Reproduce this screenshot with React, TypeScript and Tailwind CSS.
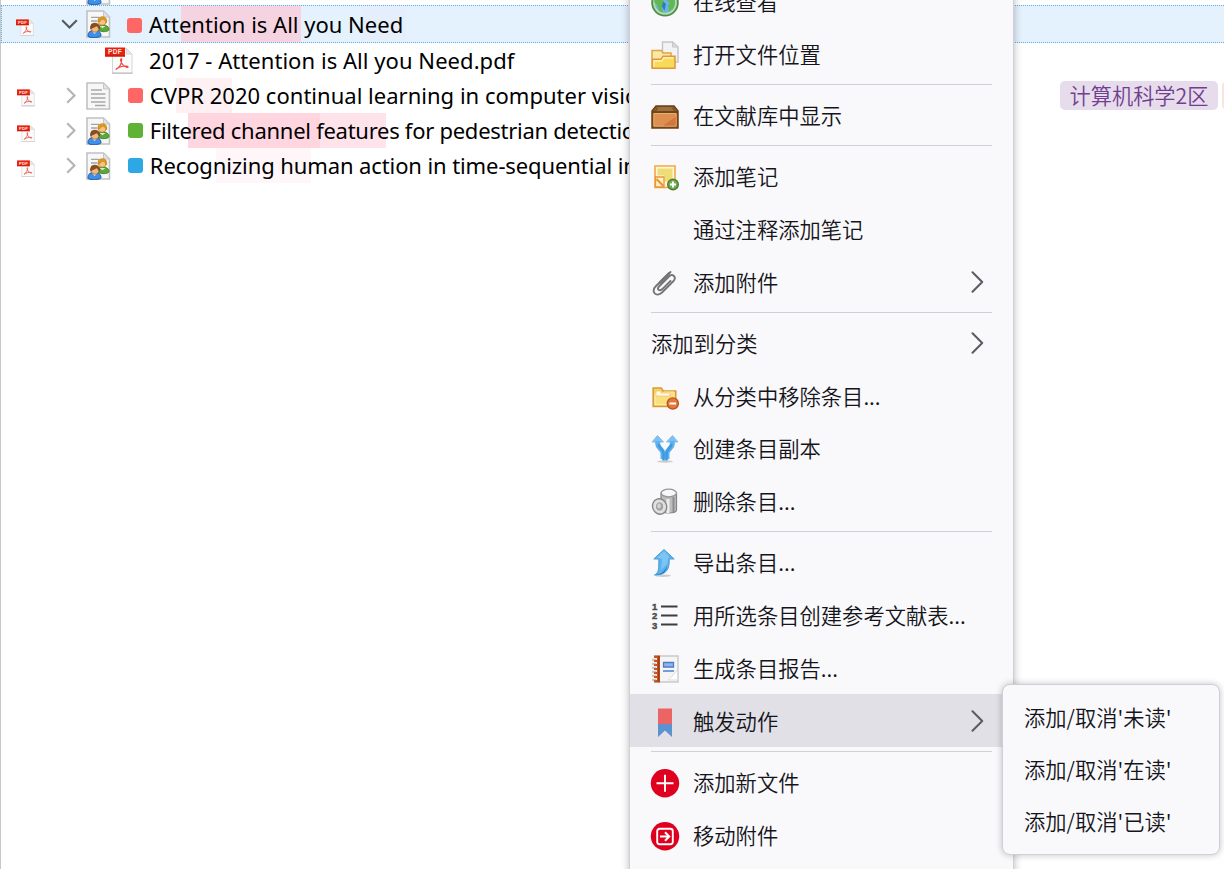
import React from "react";

const LATIN = "font-['Noto_Sans','Noto_Sans_CJK_SC',sans-serif]";
const CJK = "font-['Noto_Sans_CJK_SC','Noto_Sans',sans-serif]";

function PdfIcon({ className }: { className: string }) {
  return (
    <svg viewBox="0 0 28 27" className={className}>
      <path d="M7.5 1.5h14l5.5 5.5v19h-19.500z" fill="#fbfbfb" stroke="#d6d6d6" strokeWidth="1" />
      <path d="M21.500 1.500v5.500h5.500z" fill="#e9e9e9" stroke="#cccccc" strokeWidth=".7" />
      <path d="M7 26.200h20.500" stroke="#b5b5b5" strokeWidth="1" />
      <path d="M0 .5h20v9h-20z" fill="#e8210c" />
      <path d="M0 8.500h20v1h-20z" fill="#b91706" />
      <text x="10" y="7.400" textAnchor="middle" fontSize="6.500" fontWeight="700" fill="#ffe9e6" fontFamily="Liberation Sans, sans-serif" letterSpacing=".3">PDF</text>
      <path d="M11.500 22c2.500-1.500 5-5.500 5.200-9.300.1-1.500-1.400-1.200-1.100.4.6 3.400 3 6.200 6.400 7.300 1.500.3 1.500-1.300-.2-1.400-3.400-.1-7 .8-9.700 2.200-1.200.8-1.200 1.600-.6.8z" fill="none" stroke="#ec4a42" strokeWidth="1.200" />
    </svg>
  );
}

function PageBase() {
  return (
    <>
      <path d="M1 1h16.500l6 6v20h-22.500z" fill="#f7f7f7" stroke="#bfc1c2" strokeWidth="1.600" />
      <path d="M17.500 1v6h6z" fill="#e2e2e2" stroke="#c5c7c8" strokeWidth="1" />
    </>
  );
}

function DocIcon() {
  return (
    <svg viewBox="0 0 25 28" className="h-7 w-[25px]">
      <PageBase />
      <path d="M5 8h11M5 12h14.500M5 16h14.500M5 20h14.500M9 23.500h10.500" stroke="#a9a9a9" strokeWidth="1.300" />
    </svg>
  );
}

function PeopleIcon() {
  return (
    <svg viewBox="0 0 25 28" className="h-7 w-[25px]">
      <PageBase />
      <path d="M5 7.300h8M5 11h6M5 14.500h3" stroke="#a4a4a4" strokeWidth="1.300" />
      <path d="M11.500 20.500c0-4 2-5.500 5-5.500s6.700 1.300 6.500 4.500c-.1 1.600-2.700 2.200-6 2.200z" fill="#58a93a" stroke="#357c20" strokeWidth=".8" />
      <path d="M13.500 16l3 2.300 3-2.300z" fill="#d6efc3" />
      <circle cx="16.200" cy="11.300" r="4" fill="#f6c483" stroke="#b5731d" strokeWidth=".7" />
      <path d="M12 12c-.6-4 2-5.500 4.500-5.300 3.300 0 5 2.500 3.900 6.300-.9-2.500-2.200-3.500-4-3.800-1.500 1.600-2.600 2.500-4.400 2.800z" fill="#dd9a20" stroke="#b47415" strokeWidth=".5" />
      <path d="M2 26c0-4.500 2.500-5.500 6.500-5.500s6.500 1.500 6.500 5.200c0 2.200-13 2.700-13 .3z" fill="#3e8fe8" stroke="#174fa9" strokeWidth=".9" />
      <path d="M6 21.300h5.200l-2.500 2.600z" fill="#e3f1ff" />
      <circle cx="9" cy="18" r="4.200" fill="#f3b87e" stroke="#9a541b" strokeWidth=".7" />
      <path d="M4.800 19c-1-4.300 1.500-5.900 4.300-5.800 3.300 0 5.200 2.500 4.100 6-.7-1.700-1.700-2.800-3-3.100-1.700 1.400-3.700 1.300-5.400 2.900z" fill="#8c4d1d" stroke="#653411" strokeWidth=".5" />
    </svg>
  );
}

type Mark = { className: string };

type Entry = {
  title: string;
  icon: "doc" | "people";
  dot: string;
  marks: Mark[];
  tracking: string;
};

const entries: Entry[] = [
  {
    title: "CVPR 2020 continual learning in computer vision",
    icon: "doc",
    dot: "bg-[#ff6666]",
    marks: [{ className: "left-[175px] w-14 bg-[#fff0f4]" }],
    tracking: "tracking-[0.02px]",
  },
  {
    title: "Filtered channel features for pedestrian detection",
    icon: "people",
    dot: "bg-[#5fb236]",
    marks: [
      { className: "left-[187px] w-[132px] bg-[#ffd5e0]" },
      { className: "left-[319px] w-[66px] bg-[#ffe3eb]" },
    ],
    tracking: "tracking-[-0.27px]",
  },
  {
    title: "Recognizing human action in time-sequential images",
    icon: "people",
    dot: "bg-[#2ea8e5]",
    marks: [{ className: "left-[215px] w-[95px] bg-[#fff6fa]" }],
    tracking: "tracking-[-0.1px]",
  },
];

function Title({ text, tracking }: { text: string; tracking: string }) {
  return <span className={`relative whitespace-pre text-[22px] leading-[35px] text-black ${tracking}`}>{text}</span>;
}

function EntryRow({ entry }: { entry: Entry }) {
  return (
    <div className="relative flex h-[35.200px] items-center pl-4">
      {entry.marks.map((m) => (
        <span key={m.className} className={`absolute top-0 h-[35px] ${m.className}`} />
      ))}
      <PdfIcon className="mt-[5px] h-[17.500px] w-[18px]" />
      <svg viewBox="0 0 10 17" className="ml-[31px] h-[17px] w-[10px]">
        <path d="M1.200 1.200l7.300 7.300-7.300 7.300" fill="none" stroke="#b4b4b4" strokeWidth="2.100" />
      </svg>
      <span className="ml-[10px]">{entry.icon === "doc" ? <DocIcon /> : <PeopleIcon />}</span>
      <span className={`ml-[17px] mr-[6.800px] size-[15px] rounded-[3px] ${entry.dot}`} />
      <Title text={entry.title} tracking={entry.tracking} />
    </div>
  );
}

const icons: Record<string, React.ReactNode> = {
  globe: (
    <g transform="translate(0 .8)">
      <circle cx="14" cy="14" r="13" fill="#63ac54" stroke="#4c8c46" strokeWidth="1.500" />
      <circle cx="14" cy="14" r="11" fill="#6ab4ea" stroke="#b9dcae" strokeWidth="1.600" />
      <path d="M4 10c3-1 5 1 8 1l2 4-3 4 1 5-4-2-2-6-3-3zM17 5l6 4 1 6-2 5-4 3-1-6 2-3-4-3z" fill="#62b850" />
      <path d="M12 13l3 2-1.500 7-2.500-4z" fill="#2f78c4" />
    </g>
  ),
  open: (
    <>
      <path d="M11.500 1h10l5.500 5v15h-15.500z" fill="#f3f3f3" stroke="#c6c6c6" strokeWidth="1.500" />
      <path d="M21.500 1v5h5.500z" fill="#ddd" stroke="#c6c6c6" />
      <path d="M1 27v-17.500h9.500l1.500 2.500h8v15z" fill="#fae8a6" stroke="#dfa545" strokeWidth="1.500" />
      <path d="M1.500 27.300v-9h8.500l2-3h12v12z" fill="#f7da58" stroke="#e0963b" strokeWidth="1.500" />
      <path d="M3 25.800v-6h7.800l2-3h9.700" fill="none" stroke="#fff3bf" strokeWidth="1.300" />
    </>
  ),
  box: (
    <>
      <path d="M1 9l4-5h18l4 5v17h-26z" fill="#815020" stroke="#6d4013" strokeWidth="1.500" />
      <path d="M6 5h16l3.500 4.500h-23z" fill="#9b713f" />
      <path d="M7 5.500l-3 4M21 5.500l3 4" stroke="#6a3e14" strokeWidth="1" />
      <path d="M2.800 11.500h22.400v12.700h-22.400z" fill="#dd8f4f" stroke="#efb679" strokeWidth=".9" />
      <path d="M12 23.700l12.700-9v9z" fill="#c96031" opacity=".55" />
      <path d="M1 10h26" stroke="#6d4013" strokeWidth="1.600" />
    </>
  ),
  note: (
    <>
      <path d="M4 3h20v21.500h-20z" fill="#fff8d6" stroke="#f6a54c" strokeWidth="1.600" />
      <path d="M6.500 5.500h15v13h-8v-6h-7z" fill="#eedc76" />
      <path d="M4.500 14h8.500v10h-8.500z" fill="#fff2c8" stroke="#e99535" strokeWidth="1.300" />
      <path d="M5.500 16l7 7" stroke="#e99535" strokeWidth="2.200" />
      <circle cx="22" cy="21.500" r="5.300" fill="#75aa52" stroke="#477f32" strokeWidth="1.400" />
      <path d="M22 18.500v6M19 21.500h6" stroke="#fff" strokeWidth="2" />
    </>
  ),
  clip: (
    <g transform="translate(-1 .5)" fill="none" stroke="#757575" strokeLinecap="round" strokeLinejoin="round">
      <path d="M20.500 2.500l-14.500 14c-6 6 .5 11.500 6 6.500l11.500-11.500c3.500-4-1-8-4.500-4.500l-10 10c-2.800 3 .5 5 3 2.800l8.500-8.500" strokeWidth="1.900" />
      <path d="M19 4l-9 9" strokeWidth="2.600" />
    </g>
  ),
  folder: (
    <>
      <path d="M2.200 23.500v-18.500h8l2 3h12.500v15.500z" fill="#f7d55d" stroke="#d99b37" strokeWidth="1.600" />
      <path d="M4 21.500v-11h7l2-1.500h10v12.500z" fill="#f9df82" stroke="#fff0ae" strokeWidth="1" />
      <path d="M5 8h5v2h9v3h-14z" fill="#fffbe8" stroke="#ecc25f" strokeWidth=".7" />
      <circle cx="21.800" cy="20.500" r="5.600" fill="#e1793c" stroke="#bd5019" strokeWidth="1.300" />
      <path d="M18.500 20.500h6.600" stroke="#fff" strokeWidth="2" />
    </>
  ),
  duplicate: (
    <>
      <ellipse cx="14" cy="26.500" rx="8" ry="1.200" fill="#ccc" />
      <path d="M1 7l5.500-6.500 6 6.500zM27 7l-5.500-6.500-6 6.500z" fill="#7fc0f0" stroke="#7fc0f0" strokeWidth="1" strokeLinejoin="round" />
      <path d="M6.700 6v3c0 4.500 5.300 5 5.300 9.500v5.500M21.300 6v3c0 4.500-5.300 5-5.300 9.500v5.500" fill="none" stroke="#62b1ea" strokeWidth="5" />
      <path d="M7.500 9c.5 4 5 5 5 9.500v7M20.500 9c-.5 4-5 5-5 9.500v7" fill="none" stroke="#3d9be6" strokeWidth="2.600" />
    </>
  ),
  trash: (
    <>
      <path d="M10 5v17c0 4 15.500 4 15.500 0v-17z" fill="#bcbcbc" stroke="#858585" strokeWidth="1.200" />
      <path d="M17 11v14" stroke="#ececec" strokeWidth="3" />
      <path d="M22.500 9v15" stroke="#8d8d8d" strokeWidth="2" />
      <ellipse cx="17.800" cy="5" rx="7.700" ry="3.800" fill="#f8f8f8" stroke="#979797" strokeWidth="1.300" />
      <ellipse cx="8.600" cy="18.500" rx="7" ry="7.800" fill="#ddd" stroke="#858585" strokeWidth="1.300" transform="rotate(-20 8.600 18.500)" />
      <ellipse cx="8.600" cy="18.500" rx="4.300" ry="4.800" fill="#a5a5a5" stroke="#eee" strokeWidth="1" />
      <ellipse cx="8" cy="18" rx="1.800" ry="2.400" fill="#d5d5d5" />
    </>
  ),
  export: (
    <>
      <ellipse cx="12" cy="26.700" rx="8" ry="1.200" fill="#ccc" />
      <path d="M3.500 26c4.500-2 4.300-7 4.300-16h-5l10.200-9.500 10.200 9.500h-5c.5 9.500-2 16-14.700 16z" fill="#5cb1ed" stroke="#4a9fdd" strokeWidth="1" strokeLinejoin="round" />
      <path d="M6 8.500l7-6.500 5 5-2 8-6 6 1-11z" fill="#93d0f7" opacity=".6" />
      <path d="M4 26c6-.5 10-4 12-9-1 7-5 9-12 9z" fill="#2377bd" />
    </>
  ),
  numbers: (
    <>
      <g fontFamily="Liberation Sans, sans-serif" fontSize="9.500" fontWeight="700" fill="#4a4a4a" stroke="#4a4a4a" strokeWidth=".4">
        <text x="1" y="8">1</text>
        <text x="1" y="17.300">2</text>
        <text x="1" y="26.600">3</text>
      </g>
      <path d="M10 4.500h16.500M10 13.500h16.500M10 22.500h16.500" stroke="#3e3e3e" strokeWidth="2" />
    </>
  ),
  report: (
    <>
      <path d="M4 1h23v26h-23z" fill="#f5f5f5" stroke="#c9c9c9" strokeWidth="1.400" />
      <path d="M3 .5h6v27h-6z" fill="#c6531f" />
      <path d="M7.800 1v26" stroke="#9b3a10" strokeWidth="1.300" />
      <path d="M1 4h5M1 8h5M1 12h5M1 16h5M1 20h5M1 24h5" stroke="#eee" strokeWidth="2" />
      <path d="M1 5h4M1 9h4M1 13h4M1 17h4M1 21h4M1 25h4" stroke="#a68873" strokeWidth=".9" />
      <path d="M12.500 7.500h10v4.500h-10z" fill="#91b5e8" stroke="#4c7ec8" strokeWidth="1.300" />
      <path d="M12 16h11" stroke="#6594da" strokeWidth="1.800" />
      <path d="M26.500 15l-9 10h9z" fill="#fdfdfd" stroke="#dedede" strokeWidth="1" />
    </>
  ),
  bookmark: (
    <>
      <path d="M7 .5h14v16h-14z" fill="#ed6464" />
      <path d="M7 16h14v13l-7-6.500-7 6.500z" fill="#5b92d0" />
    </>
  ),
  add: (
    <g transform="translate(0 .3)">
      <circle cx="14" cy="14" r="14.200" fill="#df001f" />
      <path d="M14 5.500v17M5.500 14h17" stroke="#fff" strokeWidth="1.900" />
    </g>
  ),
  move: (
    <g transform="translate(0 .3)">
      <circle cx="14" cy="14" r="14.200" fill="#df001f" />
      <rect x="6.200" y="6.400" width="15.600" height="15.600" rx="2.500" fill="none" stroke="#fff" strokeWidth="1.900" />
      <path d="M9 14.200h9M14 10l4.200 4.200-4.200 4.200" fill="none" stroke="#fff" strokeWidth="2" />
    </g>
  ),
};

type MenuEntry = { label: string; icon?: string; flush?: boolean; sub?: boolean; active?: boolean };

const groups: MenuEntry[][] = [
  [
    { label: "在线查看", icon: "globe" },
    { label: "打开文件位置", icon: "open" },
  ],
  [{ label: "在文献库中显示", icon: "box" }],
  [
    { label: "添加笔记", icon: "note" },
    { label: "通过注释添加笔记" },
    { label: "添加附件", icon: "clip", sub: true },
  ],
  [
    { label: "添加到分类", flush: true, sub: true },
    { label: "从分类中移除条目...", icon: "folder" },
    { label: "创建条目副本", icon: "duplicate" },
    { label: "删除条目...", icon: "trash" },
  ],
  [
    { label: "导出条目...", icon: "export" },
    { label: "用所选条目创建参考文献表...", icon: "numbers" },
    { label: "生成条目报告...", icon: "report" },
    { label: "触发动作", icon: "bookmark", sub: true, active: true },
  ],
  [
    { label: "添加新文件", icon: "add" },
    { label: "移动附件", icon: "move" },
  ],
];

function MenuItem({ item }: { item: MenuEntry }) {
  return (
    <div className={`flex h-[52.800px] items-center pl-[21px] pr-[29px] ${item.active ? "bg-[#e0e0e6]" : ""}`}>
      {!item.flush && (
        <svg viewBox="0 0 28 28" className="mr-[14px] mt-[2px] size-7 shrink-0 overflow-visible">
          {item.icon ? icons[item.icon] : null}
        </svg>
      )}
      <span className="flex-1 whitespace-pre text-[21.300px] leading-8">{item.label}</span>
      {item.sub && (
        <svg viewBox="0 0 13 22" className="h-[22px] w-[13px]">
          <path d="M1.500 1.200l9.700 9.800-9.700 9.800" fill="none" stroke="#5b5b62" strokeWidth="2" strokeLinecap="round" strokeLinejoin="round" />
        </svg>
      )}
    </div>
  );
}

export default function App() {
  return (
    <div className={`relative h-[869px] w-[1224px] overflow-hidden border-l border-[#c8c8c8] bg-white ${LATIN}`}>
      <div className="flex h-[5px] items-end overflow-hidden">
        <span className="ml-4">
          <PdfIcon className="mb-[5px] h-[17.500px] w-[18px]" />
        </span>
        <span className="ml-[51px]">
          <PeopleIcon />
        </span>
      </div>
      <div className="relative flex h-[38px] items-center border-y border-l border-dotted border-[#62abdf] bg-[#e4f2fe] pl-[14px]">
        <span className="absolute left-[179px] top-0 h-[36px] w-[120px] bg-[#f5d3e0]" />
        <span className="absolute left-[359px] top-0 h-[36px] w-[45px] bg-[#e5effb]" />
        <PdfIcon className="mt-[7px] h-[17.500px] w-[18px]" />
        <svg viewBox="0 0 17 10" className="ml-[27px] h-[10px] w-[17px]">
          <path d="M1.200 1.200l7.300 7.300 7.300-7.300" fill="none" stroke="#555a5e" strokeWidth="2.100" />
        </svg>
        <span className="ml-2">
          <PeopleIcon />
        </span>
        <span className="ml-[16px] mr-[7px] mt-[2px] size-[15px] rounded-[3px] bg-[#ff6666]" />
        <Title text="Attention is All you Need" tracking="tracking-[0px]" />
      </div>
      <div className="flex h-[35px] items-center pl-[104px]">
        <PdfIcon className="h-[27px] w-[28px]" />
        <span className="ml-4 flex">
          <Title text="2017 - Attention is All you Need.pdf" tracking="tracking-[0.05px]" />
        </span>
      </div>
      <div className="relative">
        {entries.map((e) => (
          <EntryRow key={e.title} entry={e} />
        ))}
        <div className={`absolute left-[1059px] top-[3px] flex gap-1 ${CJK}`}>
          <span className="flex h-[29px] w-[158px] items-center justify-center whitespace-nowrap rounded-[5px] bg-[#e7dcec] pb-px text-[21.200px] font-[350] text-[#70408f]">
            计算机科学2区
          </span>
          <span className="h-[29px] w-10 rounded-[5px] bg-[#ffe1dd]" />
        </div>
      </div>

      <div
        className={`absolute left-[628px] top-[-25.500px] h-[930px] w-[385px] border-x border-[#cfcfd8] bg-[#f9f9fb] font-[350] text-[#15141a] shadow-[0_0_8px_rgba(0,0,0,0.280)] ${CJK}`}
      >
        {groups.map((g, i) => (
          <div key={i}>
            {i > 0 && <div className="mx-[21px] my-[3.700px] h-px bg-[#cfcfd8]" />}
            {g.map((item) => (
              <MenuItem key={item.label} item={item} />
            ))}
          </div>
        ))}
      </div>

      <div
        className={`absolute left-[1001px] top-[684px] h-[171px] w-[218px] rounded-[8px] border border-[#cfcfd8] bg-[#f9f9fb] py-[6px] pl-[21px] text-[21.300px] font-[350] text-[#15141a] shadow-[0_0_7px_rgba(0,0,0,0.240)] ${CJK}`}
      >
        {["未读", "在读", "已读"].map((s) => (
          <div key={s} className="flex h-[52px] items-center whitespace-pre">{`添加/取消'${s}'`}</div>
        ))}
      </div>
    </div>
  );
}
